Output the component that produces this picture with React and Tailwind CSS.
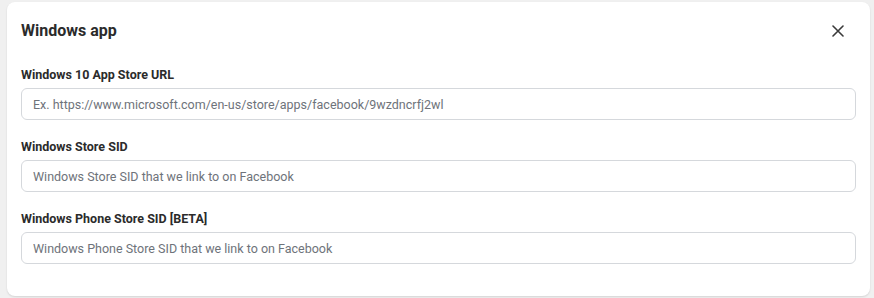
import React from "react";

function Field({ label, placeholder, last }) {
  return (
    <div className={last ? "" : "mb-[19px]"}>
      <div className="text-[12.5px] leading-4 font-bold text-[#2b2b2b]">{label}</div>
      <input
        className="mt-[5px] block w-full h-8 rounded-[6px] border border-[#d5d8dc] bg-white px-[11px] text-[12.5px] text-[#1c1e21] placeholder:text-[#6e737a] outline-none"
        placeholder={placeholder}
      />
    </div>
  );
}

export default function App() {
  return (
    <div className="w-[874px] h-[298px] bg-[#f0f0f0] pt-[2px] pl-[7px] pr-[4px] pb-[2px]" style={{ fontFamily: "Roboto, 'Liberation Sans', sans-serif" }}>
      <div className="h-[294px] bg-white rounded-[8px] shadow-[0_1px_2px_rgba(0,0,0,0.12)] pt-[17px] pl-[14px] pr-[14px]">
        <div className="flex items-center justify-between h-6">
          <div className="text-[16px] font-bold text-[#2b2b2b]">Windows app</div>
          <button className="w-6 h-6 flex items-center justify-center mr-[6px] text-[#3a3a3a]">
            <svg width="12" height="12" viewBox="0 0 12 12" fill="none" stroke="currentColor" strokeWidth="1.6" strokeLinecap="round">
              <path d="M1 1L11 11M11 1L1 11" />
            </svg>
          </button>
        </div>
        <div className="mt-6">
          <Field label="Windows 10 App Store URL" placeholder="Ex. https://www.microsoft.com/en-us/store/apps/facebook/9wzdncrfj2wl" />
          <Field label="Windows Store SID" placeholder="Windows Store SID that we link to on Facebook" />
          <Field label="Windows Phone Store SID [BETA]" placeholder="Windows Phone Store SID that we link to on Facebook" last />
        </div>
      </div>
    </div>
  );
}
